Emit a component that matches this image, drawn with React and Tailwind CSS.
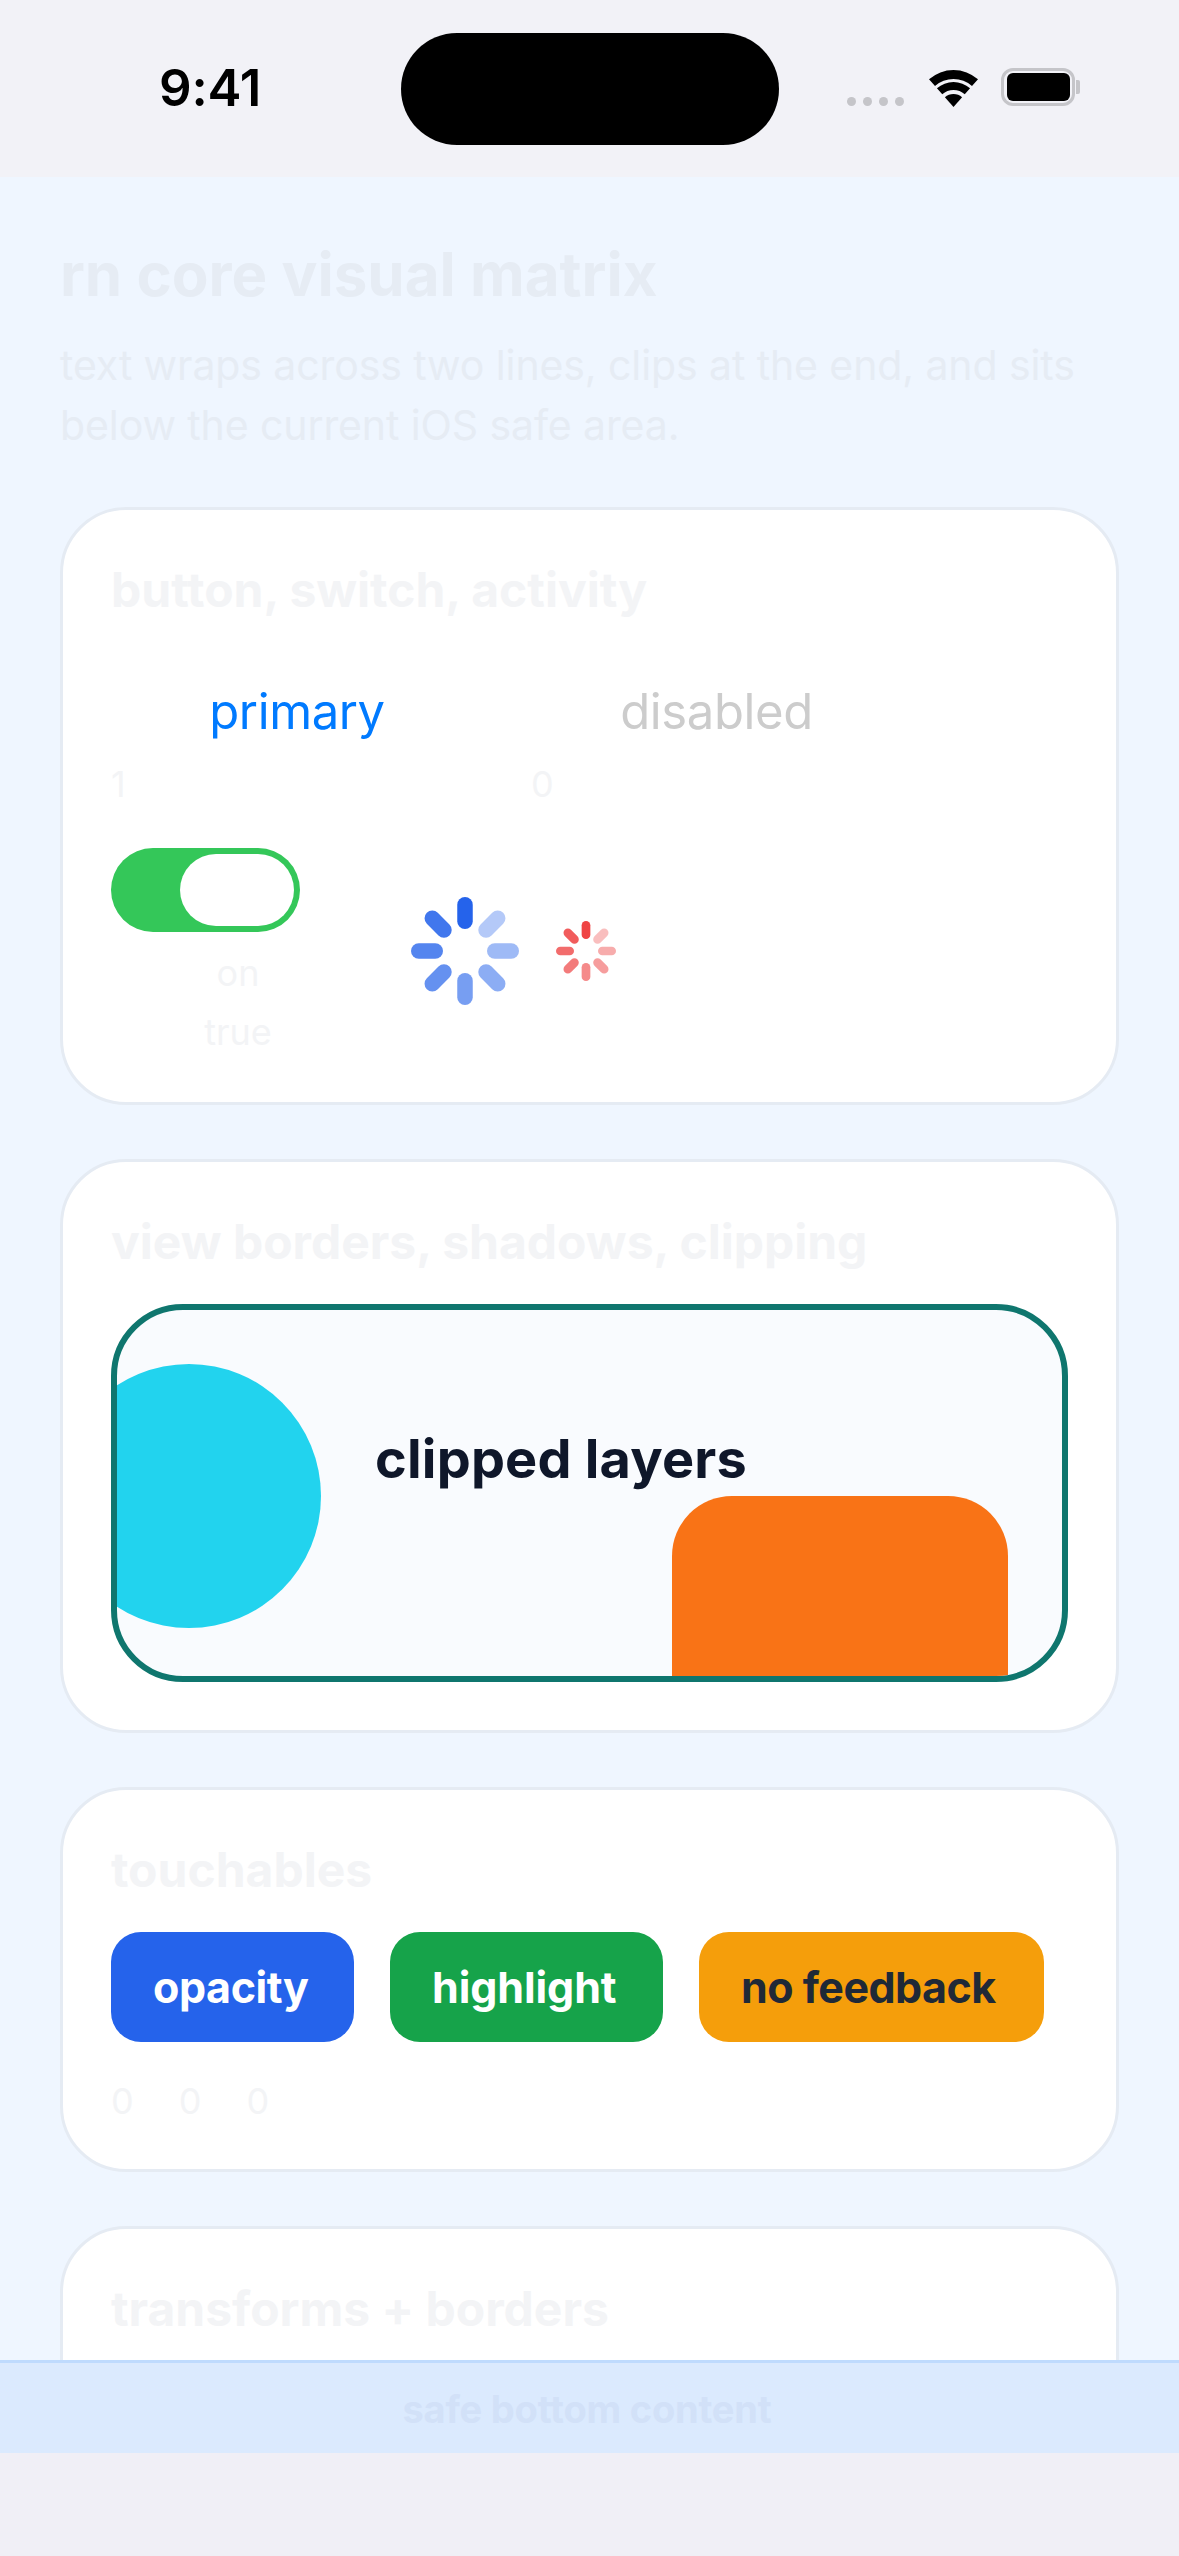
import React from "react";

const spokes = [0, 45, 90, 135, 180, 225, 270, 315];
const fade = [1, 0.34, 0.44, 0.52, 0.62, 0.7, 0.78, 0.87];

function Spinner({ size, outer, inner, width, color, className }) {
  const c = size / 2;
  return (
    <svg width={size} height={size} viewBox={`0 0 ${size} ${size}`} className={className}>
      {spokes.map((a, i) => (
        <line
          key={a}
          x1={c}
          y1={c - inner - width / 2}
          x2={c}
          y2={c - outer + width / 2}
          stroke={color}
          strokeWidth={width}
          strokeLinecap="round"
          opacity={fade[i]}
          transform={`rotate(${a} ${c} ${c})`}
        />
      ))}
    </svg>
  );
}

function Card({ title, children, className }) {
  return (
    <section className={`shrink-0 rounded-[66px] border-[3px] border-[#e5ebf3] bg-white px-[48px] pt-[48px] ${className}`}>
      <h2 className="text-[48px] leading-[63px] font-bold text-[#f3f4f6]">{title}</h2>
      {children}
    </section>
  );
}

function Touch({ className, children }) {
  return (
    <div className={`flex h-[110px] items-center rounded-[30px] pl-[42px] text-[43px] font-bold whitespace-nowrap ${className}`}>
      {children}
    </div>
  );
}

export default function App() {
  return (
    <div className="flex h-[2556px] w-[1179px] flex-col overflow-hidden bg-[#f2f2f7] font-['Inter',sans-serif]">
      <header className="flex h-[177px] shrink-0 items-start">
        <div className="mt-[58px] ml-[159px] w-[100px] text-[51px] leading-[60px] font-semibold tracking-[-0.2px] whitespace-nowrap text-black">9:41</div>
        <div className="mt-[33px] ml-[142px] h-[112px] w-[378px] rounded-[56px] bg-black" />
        <div className="mt-[97px] ml-[68px] flex gap-[7px]">
          <span className="h-[9px] w-[9px] rounded-full bg-[#c5c5c9]" />
          <span className="h-[9px] w-[9px] rounded-full bg-[#c5c5c9]" />
          <span className="h-[9px] w-[9px] rounded-full bg-[#c5c5c9]" />
          <span className="h-[9px] w-[9px] rounded-full bg-[#c5c5c9]" />
        </div>
        <svg width="49" height="37" viewBox="0 0 49 37" className="mt-[70px] ml-[25px]">
          <path d="M0 9.3A37 37 0 0 1 49 9.3L43 16A28 28 0 0 0 6 16Z" fill="#000" />
          <path d="M7.95 18.3A25 25 0 0 1 41.05 18.3L35.75 24.3A17 17 0 0 0 13.25 24.3Z" fill="#000" />
          <path d="M15.9 27.3A13 13 0 0 1 33.1 27.3L24.5 37Z" fill="#000" />
        </svg>
        <div className="mt-[68px] ml-[23px] flex items-center">
          <div className="flex h-[38px] w-[74px] items-center justify-center rounded-[12px] border-[3px] border-[#c5c5c9]">
            <div className="h-[28px] w-[63px] rounded-[6px] bg-black" />
          </div>
          <div className="ml-[1px] h-[14px] w-[4px] rounded-r-[2px] bg-[#c5c5c9]" />
        </div>
      </header>

      <main className="min-h-0 flex-1 overflow-hidden bg-[#eff6ff] px-[60px] pt-[64px]">
        <h1 className="text-[60px] leading-[66px] font-bold text-[#e6ecf4]">rn core visual matrix</h1>
        <p className="mt-[28px] text-[41px] leading-[60px] tracking-[-0.1px] text-[#e6ecf4]">
          text wraps across two lines, clips at the end, and sits below the current iOS safe area.
        </p>

        <div className="mt-[52px] flex flex-col gap-[54px]">
          <Card title="button, switch, activity" className="pb-[43px]">
            <div className="mt-[40px] flex">
              <div className="w-[372px]">
                <div className="flex h-[105px] items-center justify-center pb-[3px] text-[49px] tracking-[-0.4px] text-[#007aff]">primary</div>
                <div className="text-[36px] leading-[36px] text-[#f3f4f6]">1</div>
              </div>
              <div className="ml-[48px] w-[371px]">
                <div className="flex h-[105px] items-center justify-center pb-[3px] text-[49px] tracking-[-0.4px] text-[#cccccc]">disabled</div>
                <div className="text-[36px] leading-[36px] text-[#f3f4f6]">0</div>
              </div>
            </div>
            <div className="mt-[46px] flex items-start">
              <div className="w-[254px]">
                <div className="flex h-[84px] w-[189px] items-center justify-end rounded-full bg-[#34c759] pr-[6px]">
                  <div className="h-[72px] w-[114px] rounded-full bg-white" />
                </div>
                <div className="mt-[14px] text-center text-[36px] leading-[54px] text-[#f3f4f6]">on</div>
                <div className="mt-[5px] text-center text-[36px] leading-[54px] text-[#f3f4f6]">true</div>
              </div>
              <Spinner size={108} outer={54} inner={22} width={15.5} color="#2563eb" className="mt-[49px] ml-[46px]" />
              <Spinner size={60} outer={30} inner={12} width={8.7} color="#ef4444" className="mt-[73px] ml-[37px]" />
            </div>
          </Card>

          <Card title="view borders, shadows, clipping" className="pb-[48px]">
            <div className="relative mt-[31px] h-[378px] overflow-hidden rounded-[72px] border-[6px] border-[#0f766e] bg-[#f9fbfe] pt-[116px] pl-[258px]">
              <div className="absolute top-[54px] left-[-60px] h-[264px] w-[264px] rounded-full bg-[#22d3ee]" />
              <div className="absolute top-[186px] left-[555px] h-[240px] w-[336px] rounded-[60px] bg-[#f97316]" />
              <div className="relative text-[54px] leading-[65px] font-bold tracking-[0.2px] text-[#0f172a]">clipped layers</div>
            </div>
          </Card>

          <Card title="touchables" className="pb-[41px]">
            <div className="mt-[31px] flex gap-[36px]">
              <Touch className="w-[243px] bg-[#2563eb] tracking-[-0.4px] text-white">opacity</Touch>
              <Touch className="w-[273px] bg-[#16a34a] tracking-[-0.1px] text-white">highlight</Touch>
              <Touch className="w-[345px] bg-[#f59e0b] tracking-[-0.55px] text-[#1f2937]">no feedback</Touch>
            </div>
            <div className="mt-[32px] flex gap-[45px] text-[36px] leading-[54px] text-[#f3f4f6]">
              <span>0</span>
              <span>0</span>
              <span>0</span>
            </div>
          </Card>

          <Card title="transforms + borders" className="pb-[160px]" />
        </div>
      </main>

      <footer className="flex h-[93px] shrink-0 items-center justify-center border-t-[3px] border-[#bfdbfe] bg-[#dbeafe] pt-[2px] pr-[5px] text-[38px] font-bold tracking-[-0.2px] text-[#d2e1f8]">
        safe bottom content
      </footer>
      <div className="h-[103px] shrink-0 bg-[#f0eff6]" />
    </div>
  );
}
